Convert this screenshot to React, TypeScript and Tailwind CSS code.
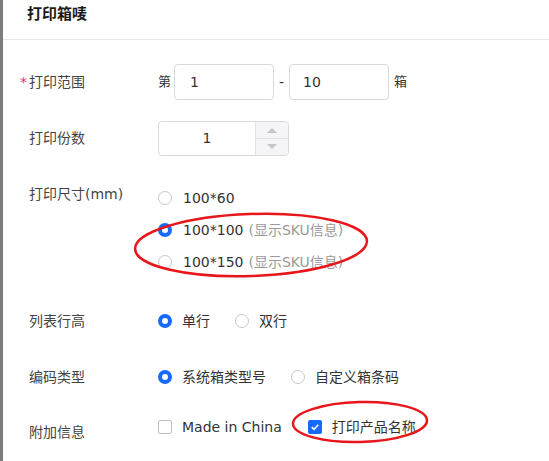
import React, { useState } from 'react';

const font = 'font-["DejaVu_Sans","Noto_Sans_CJK_SC",sans-serif]';

const Radio = ({ checked }: { checked: boolean }) => (
  <span
    className={
      checked
        ? 'inline-block w-[14px] h-[14px] rounded-full border-[4px] border-[#1769ff] bg-white shrink-0'
        : 'inline-block w-[14px] h-[14px] rounded-full border border-[#c8c8c8] bg-white shrink-0'
    }
  />
);

const Checkbox = ({ checked }: { checked: boolean }) =>
  checked ? (
    <span className="w-[14px] h-[14px] rounded-[2px] bg-[#1769ff] flex items-center justify-center shrink-0">
      <svg width="10" height="10" viewBox="0 0 10 10">
        <path d="M1.8 5.2 L4 7.3 L8.3 2.8" fill="none" stroke="#fff" strokeWidth="1.6" />
      </svg>
    </span>
  ) : (
    <span className="w-[14px] h-[14px] rounded-[2px] border border-[#bdbdbd] bg-white shrink-0" />
  );

const Label = ({ children, required }: { children: React.ReactNode; required?: boolean }) => (
  <div className="w-[129px] shrink-0 relative text-[14px] text-[#444] leading-[36px]">
    {required && <span className="absolute -left-[9px] top-0 text-[#f0306a]">*</span>}
    {children}
  </div>
);

export default function App() {
  const [size, setSize] = useState('100');
  return (
    <div className={`w-[549px] h-[461px] relative overflow-hidden bg-white flex ${font}`}>
      {/* left edge of the page behind the dialog */}
      <div className="w-[3px] shrink-0 bg-[#7d7d7d]" />

      <div className="flex-1 flex flex-col">
        {/* Header */}
        <div className="h-[40px] border-b border-[#e6e6e6] pl-[24px] pt-[2px]">
          <span className="text-[15px] font-bold text-[#1a1a1a] leading-[22px]">打印箱唛</span>
        </div>

        <div className="pl-[26px] flex flex-col text-[#333]">
          {/* 打印范围 */}
          <div className="flex h-[36px] items-center mt-[24px]">
            <Label required>打印范围</Label>
            <span className="text-[13px] mr-[3px]">第</span>
            <div className="w-[100px] h-[36px] border border-[#d9d9d9] rounded-[4px] px-[15px] flex items-center text-[14px]">1</div>
            <span className="mx-[5px] text-[14px]">-</span>
            <div className="w-[100px] h-[36px] border border-[#d9d9d9] rounded-[4px] px-[13px] flex items-center text-[14px]">10</div>
            <span className="ml-[5px] text-[13px]">箱</span>
          </div>

          {/* 打印份数 */}
          <div className="flex h-[36px] items-center mt-[20px]">
            <Label>打印份数</Label>
            <div className="w-[131px] h-[35px] border border-[#d9d9d9] rounded-[4px] flex overflow-hidden">
              <div className="flex-1 flex items-center justify-center text-[14px]">1</div>
              <div className="w-[33px] border-l border-[#e3e3e3] bg-[#f5f5f8] flex flex-col">
                <div className="flex-1 flex items-center justify-center border-b border-[#e3e3e3]">
                  <svg width="10" height="6" viewBox="0 0 10 6"><path d="M0 6 L5 1 L10 6 Z" fill="#c4c6cc" /></svg>
                </div>
                <div className="flex-1 flex items-center justify-center">
                  <svg width="10" height="6" viewBox="0 0 10 6"><path d="M0 0 L5 5 L10 0 Z" fill="#c4c6cc" /></svg>
                </div>
              </div>
            </div>
          </div>

          {/* 打印尺寸 */}
          <div className="flex mt-[20px]">
            <Label>打印尺寸(mm)</Label>
            <div className="flex flex-col mt-[6px]">
              {[
                { v: '60', t: '100*60', hint: '' },
                { v: '100', t: '100*100', hint: '(显示SKU信息)' },
                { v: '150', t: '100*150', hint: '(显示SKU信息)' },
              ].map((o) => (
                <div key={o.v} className="h-[32px] flex items-center cursor-pointer" onClick={() => setSize(o.v)}>
                  <Radio checked={size === o.v} />
                  <span className="ml-[11px] text-[14px] text-[#333]">{o.t}</span>
                  {o.hint && <span className="ml-[5px] text-[14px] text-[#9a9a9a]">{o.hint}</span>}
                </div>
              ))}
            </div>
          </div>

          {/* 列表行高 */}
          <div className="flex h-[36px] items-center mt-[25px]">
            <Label>列表行高</Label>
            <div className="flex items-center">
              <Radio checked />
              <span className="ml-[10px] text-[14px]">单行</span>
            </div>
            <div className="flex items-center ml-[25px]">
              <Radio checked={false} />
              <span className="ml-[10px] text-[14px]">双行</span>
            </div>
          </div>

          {/* 编码类型 */}
          <div className="flex h-[36px] items-center mt-[20px]">
            <Label>编码类型</Label>
            <div className="flex items-center">
              <Radio checked />
              <span className="ml-[10px] text-[14px]">系统箱类型号</span>
            </div>
            <div className="flex items-center ml-[25px]">
              <Radio checked={false} />
              <span className="ml-[10px] text-[14px]">自定义箱条码</span>
            </div>
          </div>

          {/* 附加信息 */}
          <div className="flex mt-[14px]">
            <div className="pt-[5px]">
              <Label>附加信息</Label>
            </div>
            <div className="flex items-center h-[36px]">
              <Checkbox checked={false} />
              <span className="ml-[10px] text-[14px]">Made in China</span>
              <div className="flex items-center ml-[26px]">
                <Checkbox checked />
                <span className="ml-[10px] text-[14px]">打印产品名称</span>
              </div>
            </div>
          </div>
        </div>
      </div>

      {/* red annotation ellipses */}
      <svg className="absolute left-0 top-0 pointer-events-none" width="549" height="461">
        <ellipse cx="251" cy="245" rx="116" ry="31" fill="none" stroke="#e8161b" strokeWidth="2.5" transform="rotate(-2 251 245)" />
        <ellipse cx="360" cy="422" rx="67" ry="20" fill="none" stroke="#e8161b" strokeWidth="2.5" transform="rotate(-1.5 360 422)" />
      </svg>
    </div>
  );
}
